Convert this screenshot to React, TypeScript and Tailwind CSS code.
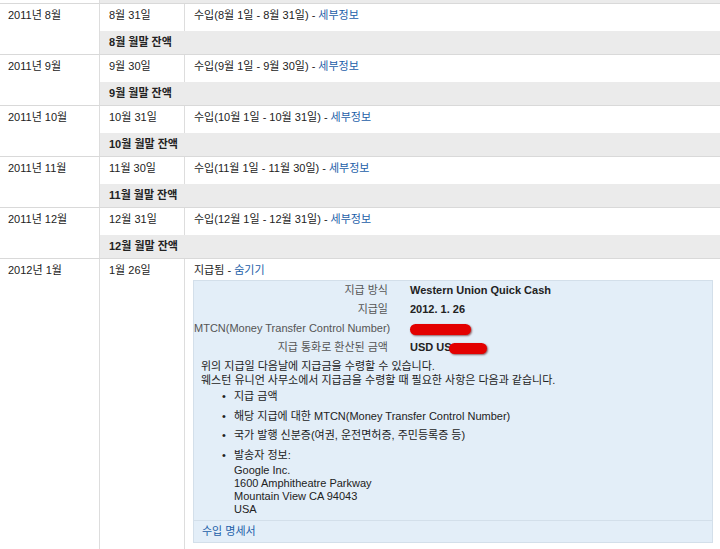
const months = [
  { label: "2011년 8월", date: "8월 31일", m: 8, end: 31 },
  { label: "2011년 9월", date: "9월 30일", m: 9, end: 30 },
  { label: "2011년 10월", date: "10월 31일", m: 10, end: 31 },
  { label: "2011년 11월", date: "11월 30일", m: 11, end: 30 },
  { label: "2011년 12월", date: "12월 31일", m: 12, end: 31 },
];

const font = "font-['Liberation_Sans','Noto_Sans_CJK_KR',sans-serif]";

function Redacted({ w, className = "" }: { w: string; className?: string }) {
  return (
    <span
      className={`inline-block h-[11px] rounded-full bg-[#e30000] shadow-[1px_1px_2px_rgba(80,0,0,0.6)] align-middle ${w} ${className}`}
    />
  );
}

function MonthBlock({ label, date, m, end }: (typeof months)[number]) {
  return (
    <div className="flex border-t border-[#d9d9d9]">
      <div className="w-[100px] shrink-0 border-r border-[#dddddd] pl-2 pt-[3px] leading-4">{label}</div>
      <div className="flex-1">
        <div className="flex h-[27px]">
          <div className="w-[85px] shrink-0 border-r border-[#dddddd] pl-[9px] pt-[3px] leading-4">{date}</div>
          <div className="flex-1 pl-[9px] pt-[3px] leading-4">
            수입({m}월 1일 - {m}월 {end}일) - <span className="text-[#1c5ea8]">세부정보</span>
          </div>
        </div>
        <div className="flex h-[23px] items-center bg-[#ebebeb] pl-[9px] font-bold">{m}월 월말 잔액</div>
      </div>
    </div>
  );
}

export default function App() {
  return (
    <div className={`h-[549px] w-[720px] overflow-hidden bg-white text-[11px] text-[#222] ${font}`}>
      <div className="flex h-[3px]">
        <div className="w-[100px] border-r border-[#dddddd]" />
        <div className="flex-1 bg-[#ebebeb]" />
      </div>
      {months.map((mo) => (
        <MonthBlock key={mo.label} {...mo} />
      ))}
      <div className="flex h-[300px] border-t border-[#d9d9d9]">
        <div className="w-[100px] shrink-0 border-r border-[#dddddd] pl-2 pt-[3px] leading-4">2012년 1월</div>
        <div className="w-[85px] shrink-0 border-r border-[#dddddd] pl-[9px] pt-[3px] leading-4">1월 26일</div>
        <div className="flex-1">
          <div className="pl-[9px] pt-[3px] leading-4">
            지급됨 - <span className="text-[#1c5ea8]">숨기기</span>
          </div>
          <div className="ml-2 mr-[7px] mt-[2px] border border-[#d3dfea] bg-[#e3eef8]">
            <div className="grid grid-cols-[194px_1fr] gap-x-[22px] leading-[19px]">
              <div className="whitespace-nowrap text-right text-[#555]">지급 방식</div>
              <div className="font-bold">Western Union Quick Cash</div>
              <div className="whitespace-nowrap text-right text-[#555]">지급일</div>
              <div className="font-bold">2012. 1. 26</div>
              <div className="whitespace-nowrap text-right text-[#555]">MTCN(Money Transfer Control Number)</div>
              <div>
                <Redacted w="w-[61px]" className="h-[10px]" />
              </div>
              <div className="whitespace-nowrap text-right text-[#555]">지급 통화로 환산된 금액</div>
              <div className="font-bold">
                USD US
                <Redacted w="w-[38px]" className="-ml-[3px]" />
              </div>
            </div>
            <div className="mt-[2px] pl-[7px] leading-[14px]">
              <p>위의 지급일 다음날에 지급금을 수령할 수 있습니다.</p>
              <p>웨스턴 유니언 사무소에서 지급금을 수령할 때 필요한 사항은 다음과 같습니다.</p>
              <ul className="mt-[2px] flex flex-col gap-[5.5px] pl-[21px] pb-1">
                {[
                  "지급 금액",
                  "해당 지급에 대한 MTCN(Money Transfer Control Number)",
                  "국가 발행 신분증(여권, 운전면허증, 주민등록증 등)",
                ].map((t) => (
                  <li key={t} className="flex">
                    <span className="w-3 shrink-0">•</span>
                    <span>{t}</span>
                  </li>
                ))}
                <li className="flex">
                  <span className="w-3 shrink-0">•</span>
                  <div>
                    <div>발송자 정보:</div>
                    <div className="mt-[2px] leading-[13px]">
                      <div>Google Inc.</div>
                      <div>1600 Amphitheatre Parkway</div>
                      <div>Mountain View CA 94043</div>
                      <div>USA</div>
                    </div>
                  </div>
                </li>
              </ul>
            </div>
            <div className="flex h-[22px] items-center border-t border-[#d3dfea] pl-2 text-[#1c5ea8]">수입 명세서</div>
          </div>
        </div>
      </div>
    </div>
  );
}
